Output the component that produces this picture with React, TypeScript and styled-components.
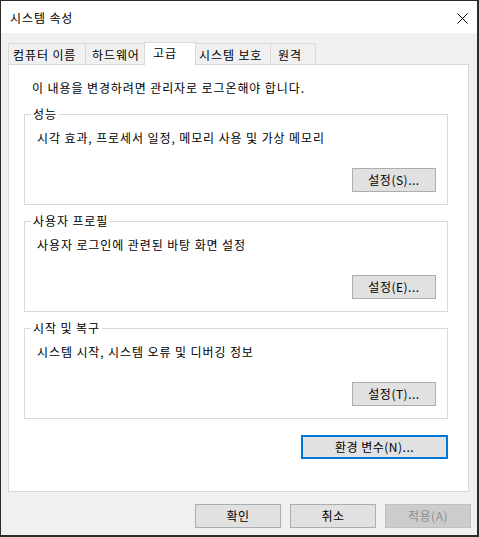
import React from 'react';
import styled, { createGlobalStyle } from 'styled-components';

interface TabProps {
  $width: number;
  $inset: number;
  $active?: boolean;
}

interface ButtonProps {
  $width: number;
  $disabled?: boolean;
}

const GlobalStyle = createGlobalStyle`
  html, body {
    margin: 0;
    padding: 0;
    background: #f0f0f0;
  }
  * {
    box-sizing: border-box;
  }
  body {
    font-family: "Noto Sans CJK KR", "Malgun Gothic", sans-serif;
    font-size: 12px;
    letter-spacing: 0.9px;
    color: #000;
  }
`;

const Window = styled.div`
  width: 479px;
  height: 537px;
  display: flex;
  flex-direction: column;
  background: #f0f0f0;
  border: 1px solid #2b2b2b;
  border-right-width: 2px;
  border-bottom-width: 2px;
`;

const TitleBar = styled.div`
  height: 32px;
  flex: none;
  display: flex;
  align-items: center;
  justify-content: space-between;
  padding: 2px 9px 0 9px;
  background: #fff;
`;

const Title = styled.span`
  font-size: 12px;
  line-height: 16px;
`;

const Content = styled.div`
  padding: 9px 8px 0 7px;
`;

const TabStrip = styled.div`
  display: flex;
  align-items: flex-end;
  height: 22px;
  position: relative;
  z-index: 1;
`;

const Tab = styled.div<TabProps>`
  width: ${(p) => p.$width}px;
  height: ${(p) => (p.$active ? 23 : 21)}px;
  margin-left: -1px;
  margin-bottom: ${(p) => (p.$active ? -1 : 0)}px;
  padding-left: ${(p) => p.$inset}px;
  padding-top: ${(p) => (p.$active ? 2 : 3)}px;
  border: 1px solid #d9d9d9;
  border-bottom: none;
  background: ${(p) => (p.$active ? '#fff' : '#f0f0f0')};
  line-height: 16px;
  white-space: nowrap;
  &:first-child {
    margin-left: 0;
  }
`;

const Panel = styled.div`
  height: 428px;
  display: flex;
  flex-direction: column;
  padding: 15px 20px 0 15px;
  background: #fff;
  border: 1px solid #d9d9d9;
`;

const Notice = styled.p`
  margin: 0 0 0 8px;
  line-height: 16px;
`;

const Group = styled.fieldset`
  margin: 10px 0 0 0;
  padding: 0 11px 12px 6px;
  min-width: 0;
  border: 1px solid #d9d9d9;
  & + & {
    margin-top: 8px;
  }
`;

const Legend = styled.legend`
  padding: 0 2px;
  line-height: 16px;
`;

const GroupBody = styled.div`
  display: flex;
  flex-direction: column;
`;

const GroupText = styled.p`
  margin: 8px 0 0 6px;
  line-height: 16px;
`;

const Button = styled.button<ButtonProps>`
  width: ${(p) => p.$width}px;
  height: 24px;
  padding: 0;
  font-family: inherit;
  font-size: 12px;
  letter-spacing: 0.5px;
  line-height: 20px;
  color: ${(p) => (p.$disabled ? '#8c8c8c' : '#000')};
  background: ${(p) => (p.$disabled ? '#cccccc' : '#e1e1e1')};
  border: 1px solid ${(p) => (p.$disabled ? '#bfbfbf' : '#adadad')};
`;

const GroupButton = styled(Button)`
  margin-top: 22px;
  align-self: flex-end;
`;

const EnvButton = styled(Button)`
  margin-top: 16px;
  align-self: flex-end;
  border: 2px solid #0078d7;
`;

const Footer = styled.div`
  display: flex;
  justify-content: flex-end;
  gap: 9px;
  padding: 12px 6px 0 0;
`;

const tabs = [
  { label: '컴퓨터 이름', width: 78, inset: 4 },
  { label: '하드웨어', width: 60, inset: 6 },
  { label: '고급', width: 52, inset: 8, active: true },
  { label: '시스템 보호', width: 76, inset: 3 },
  { label: '원격', width: 46, inset: 7 },
];

const groups = [
  { title: '성능', text: '시각 효과, 프로세서 일정, 메모리 사용 및 가상 메모리', button: '설정(S)...' },
  { title: '사용자 프로필', text: '사용자 로그인에 관련된 바탕 화면 설정', button: '설정(E)...' },
  { title: '시작 및 복구', text: '시스템 시작, 시스템 오류 및 디버깅 정보', button: '설정(T)...' },
];

const CloseIcon = () => (
  <svg width="11" height="11" viewBox="0 0 11 11">
    <path d="M0.5 0.5 L10.5 10.5 M10.5 0.5 L0.5 10.5" stroke="#000" strokeWidth="1" fill="none" />
  </svg>
);

const App: React.FC = () => {
  return (
    <>
      <GlobalStyle />
      <Window>
        <TitleBar>
          <Title>시스템 속성</Title>
          <CloseIcon />
        </TitleBar>
        <Content>
          <TabStrip>
            {tabs.map((t) => (
              <Tab key={t.label} $width={t.width} $inset={t.inset} $active={t.active}>
                {t.label}
              </Tab>
            ))}
          </TabStrip>
          <Panel>
            <Notice>이 내용을 변경하려면 관리자로 로그온해야 합니다.</Notice>
            {groups.map((g) => (
              <Group key={g.title}>
                <Legend>{g.title}</Legend>
                <GroupBody>
                  <GroupText>{g.text}</GroupText>
                  <GroupButton $width={84}>{g.button}</GroupButton>
                </GroupBody>
              </Group>
            ))}
            <EnvButton $width={147}>환경 변수(N)...</EnvButton>
          </Panel>
        </Content>
        <Footer>
          <Button $width={86}>확인</Button>
          <Button $width={86}>취소</Button>
          <Button $width={86} $disabled>
            적용(A)
          </Button>
        </Footer>
      </Window>
    </>
  );
};

export default App;
